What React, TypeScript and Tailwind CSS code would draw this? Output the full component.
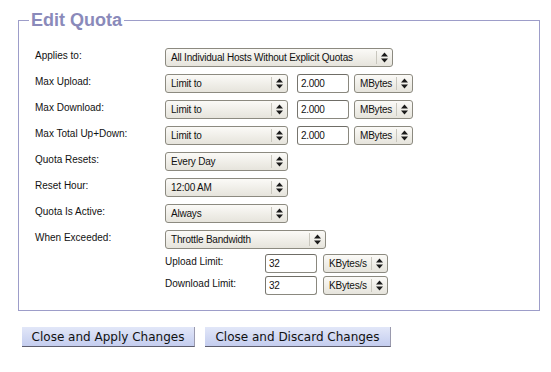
import React from 'react';

// Old GTK-styled form: rounded selects with a stacked up/down arrow
function Arrows() {
  return (
    <svg width="7" height="11" viewBox="0 0 7 11" className="block">
      <path d="M0 4.5 L3.5 0.5 L7 4.5 Z" fill="#1a1a1a" />
      <path d="M0 6.5 L7 6.5 L3.5 10.5 Z" fill="#1a1a1a" />
    </svg>
  );
}

function Select({ value, width }: { value: string; width: string }) {
  return (
    <div
      className={`${width} h-[19px] flex items-stretch rounded-[3px] border border-[#8c8a80] bg-gradient-to-b from-[#fbfaf7] to-[#e6e4dc] text-[10px] text-[#111]`}
    >
      <span className="flex-1 flex items-center pl-[5px] whitespace-nowrap overflow-hidden tracking-[-0.2px]">{value}</span>
      <span className="w-[16px] flex items-center justify-center border-l border-[#c9c7be] my-[2px]">
        <Arrows />
      </span>
    </div>
  );
}

function Input({ value, width }: { value: string; width: string }) {
  return (
    <div
      className={`${width} h-[19px] flex items-center rounded-[3px] border border-[#8a887f] border-t-[#6f6d66] border-l-[#77756e] bg-white pl-[3px] text-[10px] text-[#111] tracking-[-0.3px]`}
    >
      {value}
    </div>
  );
}

function Row({ label, children }: { label: string; children: React.ReactNode }) {
  return (
    <div className="flex items-center h-[26px]">
      <div className="w-[130px] mb-[4px] text-[10px] text-[#111]">{label}</div>
      {children}
    </div>
  );
}

function SubRow({ label, children }: { label: string; children: React.ReactNode }) {
  return (
    <div className="flex items-center h-[22px]">
      <div className="w-[100px] mb-[4px] text-[10px] text-[#111]">{label}</div>
      {children}
    </div>
  );
}

function LimitRow({ label }: { label: string }) {
  return (
    <Row label={label}>
      <Select value="Limit to" width="w-[123px]" />
      <div className="ml-[9px]">
        <Input value="2.000" width="w-[52px]" />
      </div>
      <div className="ml-[5px]">
        <Select value="MBytes" width="w-[59px]" />
      </div>
    </Row>
  );
}

export default function App() {
  return (
    <div className="w-[551px] h-[372px] bg-white pt-[9px] pl-[18px] font-['Liberation_Sans',Arial,sans-serif]">
      <fieldset className="w-[522px] border border-[#9d9dc9] pb-[14px]">
        <legend className="ml-[10px] px-[2px] text-[18px] leading-[22px] font-bold text-[#8a8aba]">
          Edit Quota
        </legend>
        <div className="pl-[16px] pt-[13px]">
          <Row label="Applies to:">
            <Select value="All Individual Hosts Without Explicit Quotas" width="w-[228px]" />
          </Row>
          <LimitRow label="Max Upload:" />
          <LimitRow label="Max Download:" />
          <LimitRow label="Max Total Up+Down:" />
          <Row label="Quota Resets:">
            <Select value="Every Day" width="w-[123px]" />
          </Row>
          <Row label="Reset Hour:">
            <Select value="12:00 AM" width="w-[123px]" />
          </Row>
          <Row label="Quota Is Active:">
            <Select value="Always" width="w-[123px]" />
          </Row>
          <Row label="When Exceeded:">
            <Select value="Throttle Bandwidth" width="w-[161px]" />
          </Row>
          <div className="pl-[130px]">
            <SubRow label="Upload Limit:">
              <Input value="32" width="w-[52px]" />
              <div className="ml-[6px]">
                <Select value="KBytes/s" width="w-[65px]" />
              </div>
            </SubRow>
            <SubRow label="Download Limit:">
              <Input value="32" width="w-[52px]" />
              <div className="ml-[6px]">
                <Select value="KBytes/s" width="w-[65px]" />
              </div>
            </SubRow>
          </div>
        </div>
      </fieldset>
      <div className="flex gap-[10px] mt-[16px] ml-[4px] font-['DejaVu_Sans',sans-serif] text-[12px] text-[#111]">
        <button className="w-[173px] h-[20px] leading-[18px] bg-gradient-to-b from-[#e2e7f8] to-[#c4cdef] border-b border-r border-b-[#5e5e6e] border-r-[#9a9aae]">
          Close and Apply Changes
        </button>
        <button className="w-[186px] h-[20px] leading-[18px] bg-gradient-to-b from-[#e2e7f8] to-[#c4cdef] border-b border-r border-b-[#5e5e6e] border-r-[#9a9aae]">
          Close and Discard Changes
        </button>
      </div>
    </div>
  );
}
